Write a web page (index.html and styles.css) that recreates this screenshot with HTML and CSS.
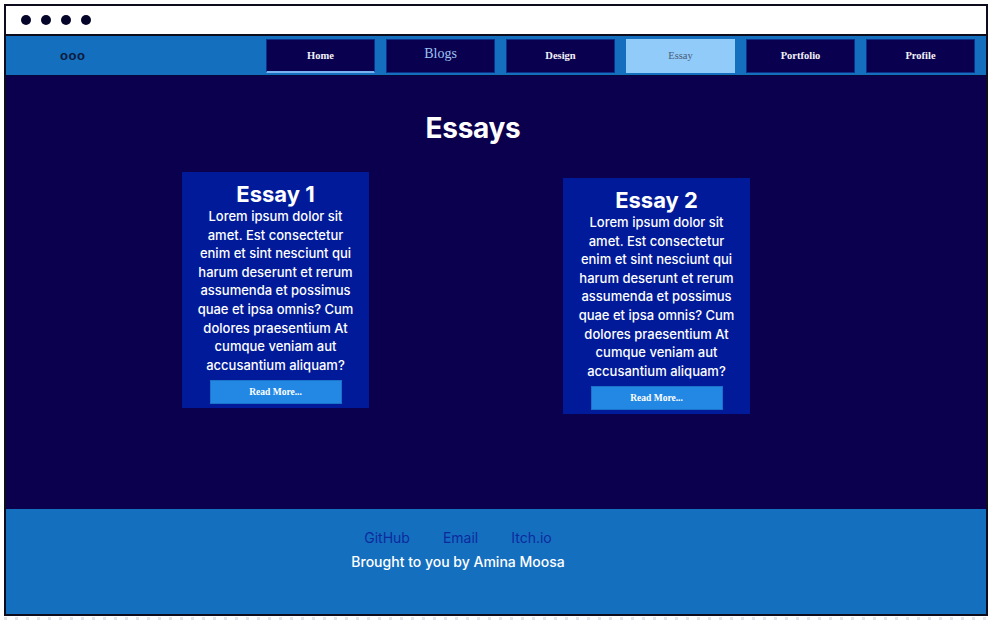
FILE: index.html
```html
<!DOCTYPE html>
<html lang="en">
<head>
<meta charset="utf-8">
<title>Essays</title>
<link rel="stylesheet" href="styles.css">
</head>
<body>
<div class="frame">
  <div class="chrome">
    <span class="dot"></span><span class="dot"></span><span class="dot"></span><span class="dot"></span>
  </div>
  <nav class="nav">
    <div class="logo">ooo</div>
    <ul class="menu">
      <li class="item home">Home</li>
      <li class="item blogs">Blogs</li>
      <li class="item">Design</li>
      <li class="item active">Essay</li>
      <li class="item">Portfolio</li>
      <li class="item">Profile</li>
    </ul>
  </nav>
  <main class="main">
    <h1 class="title">Essays</h1>
    <div class="cards">
      <article class="card">
        <h2 class="card-title">Essay 1</h2>
        <p class="card-text">Lorem ipsum dolor sit amet. Est consectetur enim et sint nesciunt qui harum deserunt et rerum assumenda et possimus quae et ipsa omnis? Cum dolores praesentium At cumque veniam aut accusantium aliquam?</p>
        <button class="btn">Read More...</button>
      </article>
      <article class="card card-low">
        <h2 class="card-title">Essay 2</h2>
        <p class="card-text">Lorem ipsum dolor sit amet. Est consectetur enim et sint nesciunt qui harum deserunt et rerum assumenda et possimus quae et ipsa omnis? Cum dolores praesentium At cumque veniam aut accusantium aliquam?</p>
        <button class="btn">Read More...</button>
      </article>
    </div>
  </main>
  <footer class="footer">
    <div class="links">
      <a class="link">GitHub</a>
      <a class="link">Email</a>
      <a class="link">Itch.io</a>
    </div>
    <p class="credit">Brought to you by Amina Moosa</p>
  </footer>
</div>
<div class="dots-row"></div>
</body>
</html>
```
FILE: styles.css
```css
* { box-sizing: border-box; }
html, body { margin: 0; padding: 0; background: #fff; }
body { width: 992px; height: 620px; overflow: hidden; font-family: "Inter", "Liberation Sans", sans-serif; }

.frame {
  margin: 4px 0 0 4px;
  width: 984px;
  height: 612px;
  border: 2px solid #0c0c1c;
  display: flex;
  flex-direction: column;
}

.chrome {
  height: 30px;
  background: #fff;
  border-bottom: 2px solid #0c0c1c;
  display: flex;
  align-items: center;
  gap: 10px;
  padding-left: 15px;
}
.dot { width: 10px; height: 10px; border-radius: 50%; background: #05052a; }

.nav {
  height: 40px;
  background: #146fbf;
  border-bottom: 1px solid #06063a;
  display: flex;
  align-items: center;
}
.logo {
  width: 260px;
  padding-left: 54px;
  font-family: "Liberation Sans", sans-serif;
  font-size: 13px;
  font-weight: bold;
  letter-spacing: 0.5px;
  color: #0b1a3d;
  line-height: 1;
}
.menu {
  list-style: none;
  margin: 0 11px 0 auto;
  padding: 0;
  display: flex;
  gap: 11px;
}
.item {
  width: 109px;
  height: 34px;
  background: #0a0050;
  color: #f2f2f8;
  font-family: "Liberation Serif", serif;
  font-weight: bold;
  font-size: 10.5px;
  display: flex;
  align-items: center;
  justify-content: center;
  border: 1px solid #0d2f8a;
}
.item.home { border-bottom: 2px solid #7ab3ef; }
.item.blogs { font-size: 14px; font-weight: normal; color: #9cc4f0; padding-bottom: 3px; }
.item.active { background: #90cbfa; color: #4a5a78; border-color: #90cbfa; font-weight: normal; }

.main {
  flex: 1;
  background: #0a004d;
  display: flex;
  flex-direction: column;
  align-items: center;
}
.title {
  margin: 34px 0 26px -46px;
  font-size: 28px;
  font-weight: 700;
  color: #fff;
  line-height: 36px;
  letter-spacing: -0.3px;
}
.cards {
  display: flex;
  align-items: flex-start;
  gap: 194px;
  margin-left: -60px;
}
.card {
  width: 187px;
  background: #001a99;
  color: #fff;
  text-align: center;
  padding: 9px 14px 4px;
  display: flex;
  flex-direction: column;
  align-items: center;
}
.card-low { margin-top: 6px; }
.card-title {
  margin: 0;
  font-size: 22px;
  font-weight: 700;
  line-height: 26px;
}
.card-text {
  margin: 0;
  font-size: 13px;
  font-weight: 500;
  line-height: 18.6px;
}
.btn {
  margin-top: 6px;
  width: 132px;
  height: 24px;
  background: #2288e4;
  border: 1px solid #1a73c8;
  color: #fff;
  font-family: "Liberation Serif", serif;
  font-weight: bold;
  font-size: 9.5px;
}

.footer {
  height: 105px;
  background: #146fbf;
  display: flex;
  flex-direction: column;
  align-items: center;
  padding-top: 19px;
  padding-right: 76px;
}
.links { display: flex; gap: 33px; }
.link { color: #0c2a9e; font-size: 14px; line-height: 20px; }
.credit { margin: 4px 0 0; color: #fff; font-size: 14px; font-weight: 500; line-height: 20px; }

.dots-row {
  height: 3px;
  margin: 1px 4px 0;
  background-image: repeating-linear-gradient(90deg, #e4e4ea 0 3px, transparent 3px 11px);
}
```
